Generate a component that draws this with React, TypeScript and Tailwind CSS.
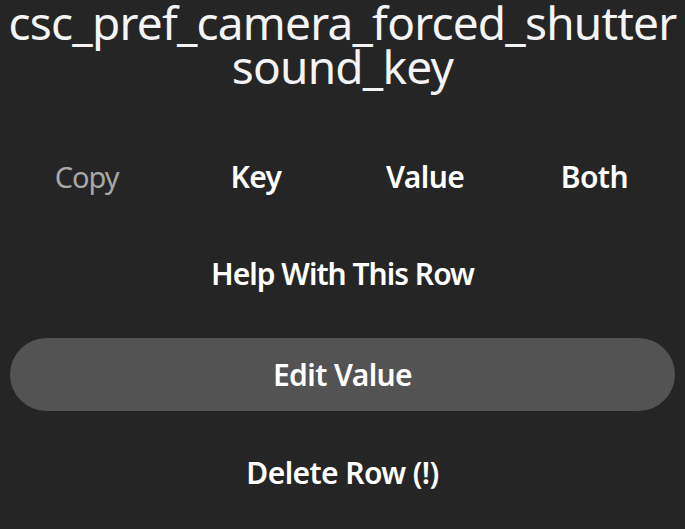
export default function App() {
  const font = { fontFamily: '"Noto Sans", "Open Sans", sans-serif' };
  return (
    <div className="w-[685px] h-[529px] bg-[#252525] text-white overflow-hidden flex flex-col" style={font}>
      <div className="text-center text-[46px] leading-[44px] tracking-[-0.8px] text-[#f4f4f4]">
        csc_pref_camera_forced_shutter sound_key
      </div>
      <div className="grid grid-cols-4 mt-[69px] h-[40px] leading-[40px] text-center pl-[2px] pr-[6px]">
        <div className="text-[29px] tracking-[-1px] text-[#a8a8a8]">Copy</div>
        <div className="text-[30px] font-semibold tracking-[-0.6px]">Key</div>
        <div className="text-[30px] font-semibold tracking-[-0.6px]">Value</div>
        <div className="text-[30px] font-semibold tracking-[-0.6px]">Both</div>
      </div>
      <div className="text-center font-semibold text-[30px] leading-[40px] tracking-[-1px] mt-[57px]">Help With This Row</div>
      <div className="mx-[10px] mt-[44px] h-[73px] rounded-full bg-[#535353] flex items-center justify-center font-semibold text-[30px] leading-[40px] tracking-[-0.6px]">Edit Value</div>
      <div className="text-center font-semibold text-[30px] leading-[40px] tracking-[-0.6px] mt-[42px]">Delete Row (!)</div>
    </div>
  );
}
